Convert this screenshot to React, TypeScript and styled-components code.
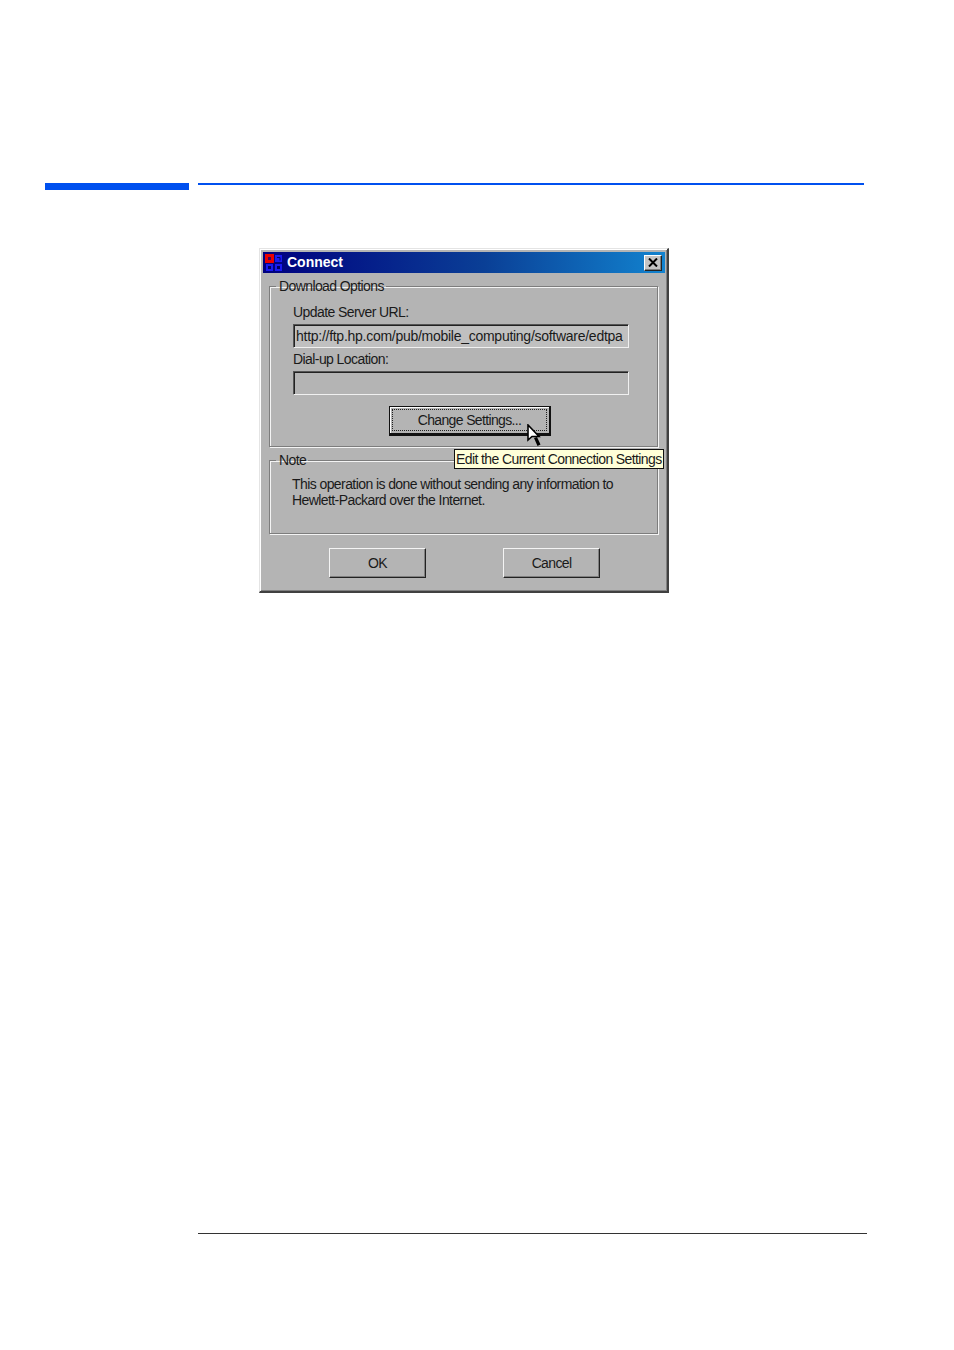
import React from 'react'
import styled, { createGlobalStyle } from 'styled-components'

const GlobalStyle = createGlobalStyle`
  html, body {
    margin: 0;
    padding: 0;
    background: white;
  }
`

const Page = styled.div`
  width: 954px;
  height: 1350px;
  overflow: hidden;
  display: flex;
  flex-direction: column;
  font-family: "Liberation Sans", Arial, sans-serif;
  color: #1a1a1a;
`

const HeaderRule = styled.div`
  display: flex;
  align-items: flex-start;
  gap: 9px;
  margin: 183px 0 0 45px;
`

const ThickRule = styled.div`
  width: 144px;
  height: 7px;
  background-color: #0050ef;
`

const ThinRule = styled.div`
  width: 666px;
  height: 2px;
  background-color: #0050ef;
`

const Dialog = styled.div`
  position: relative;
  box-sizing: border-box;
  width: 410px;
  height: 345px;
  margin: 58px 0 0 259px;
  padding: 3px 2px 0 3px;
  background-color: #b4b4b4;
  border-style: solid;
  border-width: 1px 2px 2px 1px;
  border-color: #e4e4e4 #404040 #404040 #e4e4e4;
  box-shadow: inset 1px 1px 0 #fff, inset -1px -1px 0 #808080;
`

const TitleBar = styled.div`
  display: flex;
  align-items: center;
  height: 21px;
  padding: 0 3px 0 2px;
  background: linear-gradient(90deg, #00007f 0%, #0a3f96 55%, #1283cf 100%);
`

const AppIcon = styled.svg`
  width: 18px;
  height: 18px;
  flex: none;
`

const TitleText = styled.span`
  margin-left: 4px;
  padding-bottom: 2px;
  flex: 1;
  color: white;
  font-size: 14px;
  font-weight: 700;
`

const CloseButton = styled.div`
  box-sizing: border-box;
  display: flex;
  align-items: center;
  justify-content: center;
  width: 18px;
  height: 16px;
  background-color: #c4c4c4;
  border: 1px solid;
  border-color: #fff #222 #222 #fff;
  box-shadow: inset -1px -1px 0 #808080;
`

const Group = styled.fieldset<{ $height: number }>`
  box-sizing: border-box;
  width: 389px;
  height: ${(p) => p.$height}px;
  margin: 5px 0 0 6px;
  padding: 0;
  border: 1px solid #7d7d7d;
  box-shadow: 1px 1px 0 #f4f4f4, inset 1px 1px 0 #f4f4f4;
`

const Legend = styled.legend`
  margin-left: 6px;
  padding: 0 2px 0 3px;
  font-size: 14px;
  line-height: 16px;
  letter-spacing: -0.6px;
`

const GroupBody = styled.div`
  padding-left: 23px;
`

const FieldLabel = styled.div<{ $top: number }>`
  margin-top: ${(p) => p.$top}px;
  font-size: 14px;
  line-height: 16px;
  letter-spacing: -0.58px;
`

const Field = styled.div<{ $filled?: boolean }>`
  box-sizing: border-box;
  width: 336px;
  height: 24px;
  margin-top: 4px;
  padding-left: 2px;
  white-space: nowrap;
  overflow: hidden;
  font-size: 14px;
  line-height: 22px;
  letter-spacing: -0.27px;
  background-color: ${(p) => (p.$filled ? '#c0c0c0' : '#b4b4b4')};
  border: 1px solid;
  border-color: #555 #f0f0f0 #f0f0f0 #555;
  box-shadow: inset 1px 1px 0 #222;
`

const ButtonRow = styled.div`
  display: flex;
  margin: 11px 0 0 96px;
`

const DefaultButton = styled.div`
  box-sizing: border-box;
  width: 162px;
  height: 30px;
  padding: 2px;
  background-color: #b4b4b4;
  border: 1px solid #111;
  border-right-width: 2px;
  border-bottom-width: 3px;
  box-shadow: inset 1px 1px 0 #fff;
`

const FocusRing = styled.div`
  display: flex;
  align-items: center;
  justify-content: center;
  height: 100%;
  box-sizing: border-box;
  border: 1px dotted #222;
  font-size: 14px;
  letter-spacing: -0.65px;
`

const NoteText = styled.p`
  margin: 8px 0 0 -1px;
  font-size: 14px;
  line-height: 16px;
  letter-spacing: -0.58px;
`

const DialogActions = styled.div`
  display: flex;
  gap: 77px;
  margin: 14px 0 0 66px;
`

const Button = styled.div`
  box-sizing: border-box;
  display: flex;
  align-items: center;
  justify-content: center;
  width: 97px;
  height: 30px;
  padding-bottom: 1px;
  background-color: #b4b4b4;
  border: 1px solid;
  border-color: #f4f4f4 #222 #222 #f4f4f4;
  box-shadow: inset -1px -1px 0 #808080;
  font-size: 14px;
  letter-spacing: -0.65px;
`

const Tooltip = styled.div`
  position: absolute;
  left: 194px;
  top: 200px;
  box-sizing: border-box;
  width: 210px;
  height: 20px;
  padding-left: 1px;
  background-color: #ffffd8;
  border: 1px solid #111;
  white-space: nowrap;
  font-size: 14px;
  line-height: 18px;
  letter-spacing: -0.6px;
`

const Cursor = styled.svg`
  position: absolute;
  left: 267px;
  top: 175px;
  width: 15px;
  height: 24px;
`

const FooterRule = styled.div`
  width: 669px;
  height: 1px;
  margin: 640px 0 0 198px;
  background-color: #333;
`

const App = () => {
  return (
    <Page>
      <GlobalStyle />
      <HeaderRule>
        <ThickRule />
        <ThinRule />
      </HeaderRule>
      <Dialog>
        <TitleBar>
          <AppIcon viewBox="0 0 18 18">
            <rect x="0" y="0" width="9" height="9" fill="#e80000" />
            <rect x="3" y="3" width="3" height="3" fill="#400060" />
            <rect x="10" y="1" width="7" height="7" fill="#1a1af0" />
            <path d="M12 3.5h3v3" stroke="#000060" fill="none" />
            <rect x="1" y="10" width="7" height="7" fill="#1a1af0" />
            <rect x="3" y="12" width="3" height="3" fill="#000060" />
            <rect x="10" y="10" width="7" height="7" fill="#1a1af0" />
            <rect x="12" y="12" width="3" height="3" fill="#000060" />
          </AppIcon>
          <TitleText>Connect</TitleText>
          <CloseButton>
            <svg width="10" height="9" viewBox="0 0 10 9">
              <path d="M1 0.5l8 8M9 0.5l-8 8" stroke="#000" strokeWidth="2" />
            </svg>
          </CloseButton>
        </TitleBar>
        <Group $height={169}>
          <Legend>Download Options</Legend>
          <GroupBody>
            <FieldLabel $top={10}>Update Server URL:</FieldLabel>
            <Field $filled>http://ftp.hp.com/pub/mobile_computing/software/edtpa</Field>
            <FieldLabel $top={3}>Dial-up Location:</FieldLabel>
            <Field />
            <ButtonRow>
              <DefaultButton>
                <FocusRing>Change Settings...</FocusRing>
              </DefaultButton>
            </ButtonRow>
          </GroupBody>
        </Group>
        <Group $height={82}>
          <Legend>Note</Legend>
          <GroupBody>
            <NoteText>
              This operation is done without sending any information to
              <br />
              Hewlett-Packard over the Internet.
            </NoteText>
          </GroupBody>
        </Group>
        <DialogActions>
          <Button>OK</Button>
          <Button>Cancel</Button>
        </DialogActions>
        <Tooltip>Edit the Current Connection Settings</Tooltip>
        <Cursor viewBox="0 0 15 24">
          <path d="M7 14l3.5 8 3-1.4L10 13z" fill="#000" />
          <path d="M1 1v15l4-3.5h7z" fill="#fff" stroke="#000" strokeWidth="1.6" />
        </Cursor>
      </Dialog>
      <FooterRule />
    </Page>
  )
}

export default App
